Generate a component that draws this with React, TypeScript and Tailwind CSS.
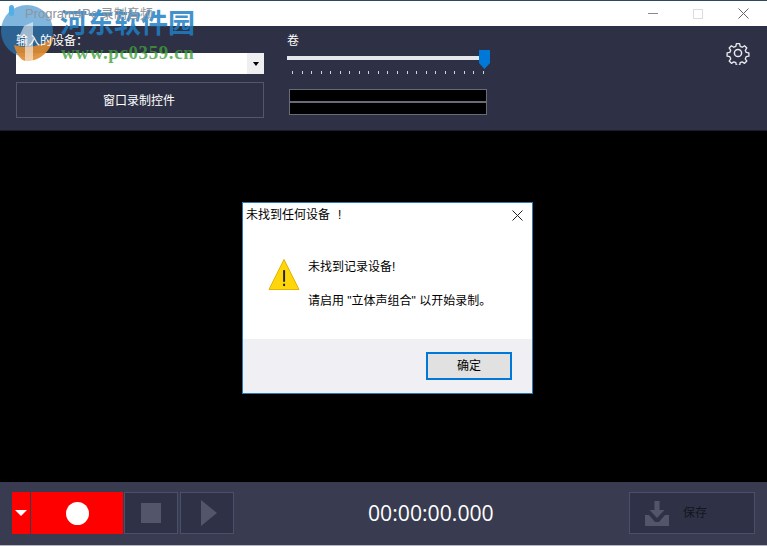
const cjk = "font-['Liberation_Sans','Noto_Sans_CJK_SC',sans-serif]";

const ticks = Array.from({ length: 21 });

const GearIcon = () => (
  <svg width="24" height="24" viewBox="0 0 24 24" fill="none" stroke="#e8e9ee" strokeWidth="1.5" strokeLinejoin="round">
    <circle cx="12" cy="12" r="3.6" />
    <path d="M10.2 1.6h3.6l.6 3 2.3 1 2.6-1.7 2.5 2.5-1.7 2.6 1 2.3 3 .6v3.6l-3 .6-1 2.3 1.7 2.6-2.5 2.5-2.6-1.7-2.3 1-.6 3h-3.6l-.6-3-2.3-1-2.6 1.7-2.5-2.500 1.7-2.6-1-2.3-3-.6v-3.6l3-.6 1-2.3-1.7-2.6 2.5-2.5 2.6 1.7 2.3-1z" transform="translate(1.2 1.2) scale(0.9)" />
  </svg>
);

const App = () => {
  return (
    <div className={`relative flex h-[546px] w-[767px] flex-col overflow-hidden bg-black ${cjk}`}>
      {/* title bar */}
      <div className="flex h-[26px] shrink-0 items-center border-t border-[#2b4a5c] bg-white pl-[25px]">
        <span className="relative z-20 text-[13px] text-[#8f959c]">Program4Pc 录制音频</span>
        <div className="ml-auto flex items-center">
          <div className="mr-[35px] h-px w-[10px] bg-[#8a8a8a]" />
          <div className="mr-[35px] h-[10px] w-[10px] border border-[#dcdcdc]" />
          <svg className="mr-[18px]" width="11" height="11" viewBox="0 0 11 11" stroke="#666" strokeWidth="1">
            <path d="M.5.5l10 10M10.5.5l-10 10" />
          </svg>
        </div>
      </div>

      {/* top toolbar */}
      <div className="flex h-[105px] shrink-0 border-b border-[#1b1c28] bg-[#2e3145] pl-4 pr-[17px]">
        <div className="flex w-[248px] flex-col">
          <div className="relative z-20 mt-[7px] h-[17px] text-[12px] leading-[17px] text-white">输入的设备：</div>
          <div className="relative z-0 mt-[3px] flex h-[21px] justify-end bg-white">
            <div className="flex w-[17px] items-center justify-center bg-[#efeff2]">
              <div className="h-0 w-0 border-x-[3.5px] border-t-[4px] border-x-transparent border-t-black" />
            </div>
          </div>
          <button className="mt-2 h-[36px] border border-[#54566a] pr-[2px] pt-px text-[12px] text-white">窗口录制控件</button>
        </div>

        <div className="ml-[23px] flex w-[204px] flex-col">
          <div className="mt-[7px] h-[17px] text-[12px] leading-[17px] text-white">卷</div>
          <div className="relative h-[21px]">
            <div className="absolute left-0 right-[12px] top-[6px] h-1 bg-[#e6e7ec]" />
            <svg className="absolute left-[192px] top-0" width="11" height="19" viewBox="0 0 11 19">
              <path d="M0 0h11v13l-5.500 6-5.500-6z" fill="#0078d7" />
            </svg>
          </div>
          <div className="flex justify-between pl-[5px] pr-[7px]">
            {ticks.map((_, i) => (
              <div key={i} className="h-[3px] w-px bg-[#d5d6dc]" />
            ))}
          </div>
          <div className="ml-[2px] mt-[15px] flex w-[198px] flex-col">
            <div className="h-[13px] border border-[#6a6b78] bg-black" />
            <div className="h-[13px] border border-[#6a6b78] bg-black" />
          </div>
        </div>

        <div className="ml-auto mt-[15px]">
          <GearIcon />
        </div>
      </div>

      {/* black canvas with dialog */}
      <div className="flex flex-1 items-start justify-center bg-black pl-[8px] pt-[71px]">
        <div className="flex h-[192px] w-[291px] flex-col border border-[#2a7ab8] bg-white">
          <div className="flex h-[24px] items-center pl-[3px] pr-[9px] text-[12px] text-black">
            <span>未找到任何设备</span>
            <span className="ml-[8px]">!</span>
            <svg className="ml-auto" width="11" height="11" viewBox="0 0 11 11" stroke="#222" strokeWidth="1">
              <path d="M.5.5l10 10M10.5.5l-10 10" />
            </svg>
          </div>
          <div className="flex flex-1 pl-[25px] pt-[32px]">
            <svg className="-mt-[1px]" width="32" height="33" viewBox="0 0 33 33">
              <path d="M16.5 1L32 32H1z" fill="#ffd60a" stroke="#e2b100" strokeWidth="1" strokeLinejoin="round" />
              <rect x="15.6" y="12" width="2" height="12" fill="#222" />
              <rect x="15.6" y="26" width="2" height="2.4" fill="#222" />
            </svg>
            <div className="ml-[8px] text-[12px] leading-[17px] text-black">
              <div>未找到记录设备!</div>
              <div className="mt-[17px]">请启用 "立体声组合" 以开始录制。</div>
            </div>
          </div>
          <div className="flex h-[54px] items-center justify-end bg-[#f0eff3] pr-[20px]">
            <button className="h-[28px] w-[86px] border-2 border-[#0078d7] bg-[#e1e1e1] text-[12px] text-black">确定</button>
          </div>
        </div>
      </div>

      {/* bottom bar */}
      <div className="flex h-[64px] shrink-0 items-start border-b border-[#b5b6c0] bg-[#393c50] pl-3 pr-3 pt-[10px]">
        <button className="flex h-[42px] w-[18px] items-center justify-center bg-[#ff0000]">
          <div className="h-0 w-0 border-x-[6px] border-t-[6px] border-x-transparent border-t-white" />
        </button>
        <button className="ml-px flex h-[42px] w-[92px] items-center justify-center bg-[#ff0000]">
          <div className="h-[23px] w-[23px] rounded-full bg-white" />
        </button>
        <button className="ml-px flex h-[42px] w-[54px] items-center justify-center border border-[#4b4f6c] bg-[#2f3246]">
          <div className="h-5 w-5 bg-[#53566a]" />
        </button>
        <button className="ml-[2px] flex h-[42px] w-[54px] items-center justify-center border border-[#4b4f6c] bg-[#2f3246]">
          <div className="ml-[3px] h-0 w-0 border-y-[13px] border-l-[16px] border-y-transparent border-l-[#53566a]" />
        </button>
        <div className="ml-[134px] h-[42px] font-['Open_Sans',sans-serif] text-[21.2px] leading-[42px] text-white">00:00:00.000</div>
        <button className="ml-auto flex h-[42px] w-[126px] items-center border border-[#4b4f6c] bg-[#2f3246] pl-[15px] text-[12px] text-[#14151f]">
          <svg width="24" height="25" viewBox="0 0 24 25" fill="#53566a">
            <path d="M9.5 0h5v9h5L12 17 4.500 9h5z" />
            <path d="M0 14h4l6 7h4l6-7h4v11H0z" />
          </svg>
          <span className="ml-[14px]">保存</span>
        </button>
      </div>

      {/* site watermark stamped over the window */}
      <div className="pointer-events-none absolute left-0 top-0 z-10 h-[62px] w-[60px]">
        <svg width="60" height="62" viewBox="0 0 60 62">
          <circle cx="27" cy="31" r="26" fill="#2b86c8" opacity="0.6" />
          <path d="M14 45C26 49 44 47 54 35C52 51 40 61 27 61C20 61 16 53 14 45z" fill="#e08a2c" opacity="0.9" />
          <path d="M24 26L33 22V61H25V35L18 39z" fill="#ffffff" opacity="0.55" />
          <rect x="9" y="5" width="5" height="11" rx="2.5" fill="#4fb0e8" />
        </svg>
      </div>
      <div className="pointer-events-none absolute left-[60px] top-[8px] z-10 font-['Liberation_Serif','Noto_Sans_CJK_SC',serif] text-[27px] font-bold leading-[32px] text-[#1f7fc4]/85">河东软件园</div>
      <div className="pointer-events-none absolute left-[61px] top-[43px] z-10 font-['Liberation_Serif',serif] text-[19px] font-bold leading-5 tracking-[0.6px] text-[#3f9e3a]/80">www.pc0359.cn</div>
    </div>
  );
};

export default App;
